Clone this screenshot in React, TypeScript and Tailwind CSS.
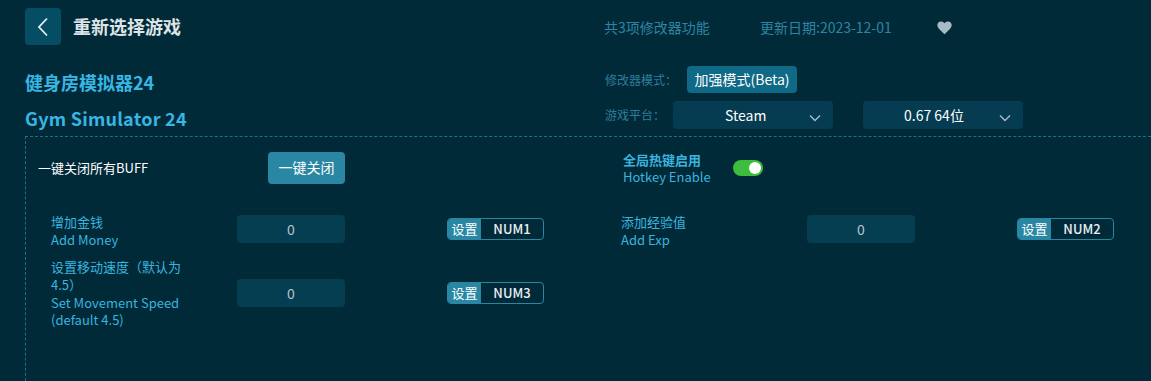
import React from "react";

const font = { fontFamily: '"Noto Sans CJK SC", "Noto Sans", sans-serif' };

function Chevron() {
  return (
    <svg width="12" height="8" viewBox="0 0 12 8" fill="none" className="absolute right-[12px] top-[13px]">
      <path d="M1 1.5 L6 6.5 L11 1.5" stroke="#a8bcc8" strokeWidth="1.4" />
    </svg>
  );
}

function KeyBox({ k }: { k: string }) {
  return (
    <div className="flex h-[22px] w-[97px] rounded-[4px] border border-[#2a87a3] overflow-hidden">
      <div className="w-[33px] bg-[#2a87a3] text-white text-[13px] leading-[20px] flex items-center justify-center">设置</div>
      <div className="flex-1 text-[#e8eef2] text-[13px] font-medium flex items-center justify-center leading-[20px]">{k}</div>
    </div>
  );
}

function Feature({ zh, en, extra }: { zh: React.ReactNode; en: React.ReactNode; extra?: string }) {
  return (
    <div className="flex items-center">
      <div className="w-[186px] text-[13px] leading-[18px] pt-[4px]">
        <div className="text-[#3ab4df]">{zh}</div>
        <div className="text-[#3ab4df]">{en}</div>
      </div>
      <div className="w-[108px] h-[28px] rounded-[4px] bg-[#053d51] text-[#b8c4cc] text-[14px] flex items-center justify-center">0</div>
      <div className="ml-[102px]">
        <KeyBox k={extra || ""} />
      </div>
    </div>
  );
}

export default function App() {
  return (
    <div className="w-[1151px] h-[381px] bg-[#012a39] overflow-hidden relative" style={font}>
      {/* header */}
      <div className="flex items-start h-[66px]">
        <div className="flex items-center pl-[25px] pt-[8px] w-[604px]">
          <div className="w-[36px] h-[37px] rounded-[4px] bg-[#044d63] flex items-center justify-center">
            <svg width="12" height="20" viewBox="0 0 12 20" fill="none">
              <path d="M10 1.5 L2 10 L10 18.5" stroke="#e6eef2" strokeWidth="1.8" />
            </svg>
          </div>
          <div className="ml-[12px] text-[18px] font-bold text-[#dde4e8]">重新选择游戏</div>
        </div>
        <div className="flex items-center pt-[17px] text-[14px] text-[#2f84a3]">
          <div className="w-[156px]">共3项修改器功能</div>
          <div className="w-[177px]">更新日期:2023-12-01</div>
          <svg width="15" height="14" viewBox="0 0 24 22">
            <path d="M12 21 L10.3 19.4 C4.2 13.9 0.5 10.5 0.5 6.3 C0.5 2.9 3.1 0.5 6.4 0.5 C8.6 0.5 10.6 1.6 12 3.2 C13.4 1.6 15.4 0.5 17.6 0.5 C20.9 0.5 23.5 2.9 23.5 6.3 C23.5 10.5 19.8 13.9 13.7 19.4 Z" fill="#a9bac7" />
          </svg>
        </div>
      </div>

      {/* game info */}
      <div className="flex h-[70px]">
        <div className="pl-[25px] w-[605px] text-[18px] font-bold text-[#38b6e4]">
          <div className="leading-[24px] mt-[4px]">健身房模拟器24</div>
          <div className="leading-[24px] mt-[12px] tracking-[0.25px]">Gym Simulator 24</div>
        </div>
        <div className="text-[12px] text-[#2d7e9c]">
          <div className="flex items-center h-[27px]">
            <div className="w-[82px]">修改器模式：</div>
            <div className="h-[27px] w-[110px] rounded-[4px] bg-[#0f6a87] text-white text-[14px] flex items-center justify-center">加强模式(Beta)</div>
          </div>
          <div className="flex items-center mt-[8px] h-[28px]">
            <div className="w-[68px]">游戏平台：</div>
            <div className="relative w-[160px] h-[28px] rounded-[4px] bg-[#053c51] text-white text-[14px] flex items-center pl-[52px]">
              Steam
              <Chevron />
            </div>
            <div className="relative ml-[30px] w-[160px] h-[28px] rounded-[4px] bg-[#053c51] text-white text-[14px] flex items-center pl-[41px]">
              0.67 64位
              <Chevron />
            </div>
          </div>
        </div>
      </div>

      {/* main box */}
      <div className="ml-[25px] border-l border-t border-dashed border-[#1e6f8a] h-[260px]">
        <div className="flex items-center pt-[14px] h-[47px]">
          <div className="pl-[12px] w-[242px] text-[13px] text-white">一键关闭所有BUFF</div>
          <div className="w-[77px] h-[32px] rounded-[4px] bg-[#2a87a3] text-white text-[14px] flex items-center justify-center">一键关闭</div>
          <div className="ml-[278px] text-[13px] leading-[17px] w-[110px]">
            <div className="font-bold text-[#3ab4df]">全局热键启用</div>
            <div className="text-[#3ab4df]">Hotkey Enable</div>
          </div>
          <div className="w-[30px] h-[16px] rounded-full bg-[#3dbd3d] flex items-center justify-end pr-[2px]">
            <div className="w-[12px] h-[12px] rounded-full bg-white" />
          </div>
        </div>

        <div className="grid grid-cols-[570px_570px] px-[25px] mt-[25px]">
          <Feature zh="增加金钱" en="Add Money" extra="NUM1" />
          <Feature zh="添加经验值" en="Add Exp" extra="NUM2" />
          <div className="mt-[9px]">
            <div className="flex items-center">
              <div className="w-[186px] text-[13px] leading-[18px] text-[#3ab4df]">
                <div>设置移动速度（默认为</div>
                <div>4.5）</div>
                <div>Set Movement Speed</div>
                <div className="leading-[16px]">(default 4.5)</div>
              </div>
              <div className="w-[108px] h-[28px] rounded-[4px] bg-[#053d51] text-[#b8c4cc] text-[14px] flex items-center justify-center">0</div>
              <div className="ml-[102px]">
                <KeyBox k="NUM3" />
              </div>
            </div>
          </div>
        </div>
      </div>
    </div>
  );
}
